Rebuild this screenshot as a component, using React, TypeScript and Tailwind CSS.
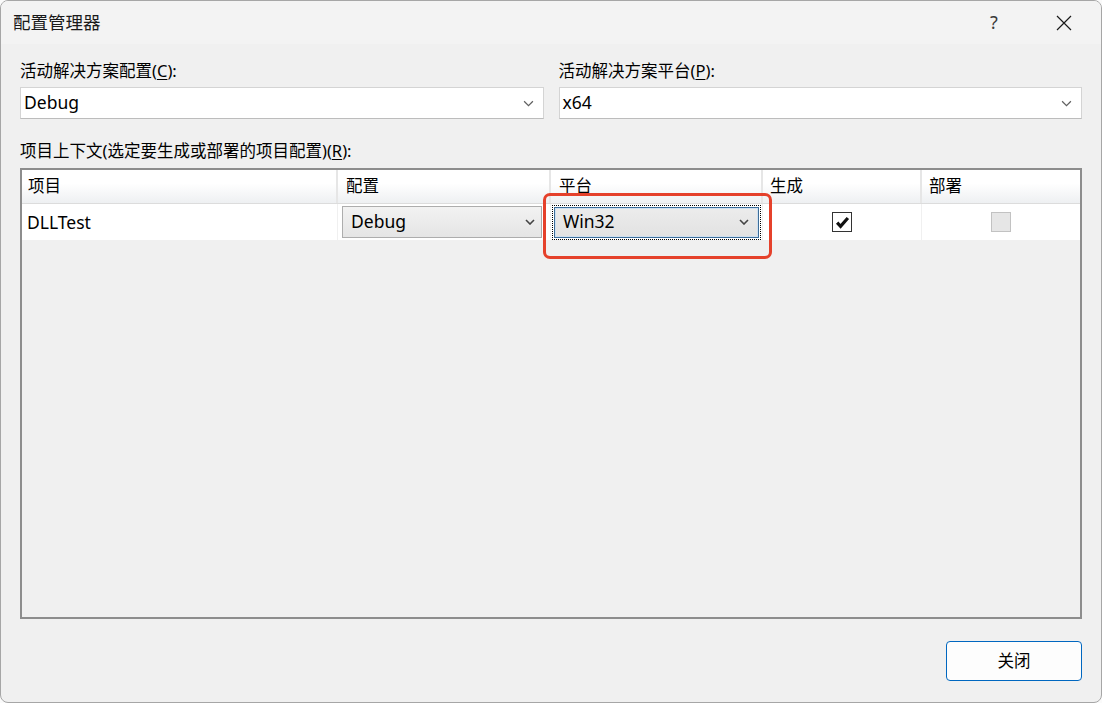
import React from 'react';

const font = "font-['Noto_Sans','Noto_Sans_CJK_SC',sans-serif]";

const Chevron = ({ className, width = 1.1 }: { className?: string; width?: number }) => (
  <svg viewBox="0 0 10 6" className={className} fill="none" stroke="currentColor" strokeWidth={width}>
    <path d="M1 1l4 4 4-4" />
  </svg>
);

const TopCombo = ({ value }: { value: string }) => (
  <div className="h-[32px] bg-white border border-[#d4d4d4] border-b-[#bcbcbc] flex items-center justify-between pl-[3px] pr-[9px]">
    <span className="text-[17.5px] text-black leading-none">{value}</span>
    <Chevron className="w-[11px] h-[7px] text-[#606060]" />
  </div>
);

const App: React.FC = () => {
  return (
    <div className={`w-[1102px] h-[703px] bg-[#fafafa] ${font}`}>
      <div className="h-full rounded-[8px] border border-[#a6a6a6] bg-[#f0f0f0] overflow-hidden flex flex-col">
        {/* Title bar */}
        <div className="h-[43px] bg-[#f3f3f3] flex items-center justify-between pl-[12px]">
          <span className="text-[17.5px] text-[#1a1a1a]">配置管理器</span>
          <div className="flex items-center h-full">
            <div className="w-[70px] h-full flex items-center justify-center text-[18px] text-[#3a3a3a]">?</div>
            <div className="w-[70px] h-full flex items-center justify-center mr-[2px]">
              <svg viewBox="0 0 16 16" className="w-[16px] h-[16px]" stroke="#1a1a1a" strokeWidth="1.2">
                <path d="M1 1l14 14M15 1L1 15" />
              </svg>
            </div>
          </div>
        </div>

        {/* Body */}
        <div className="flex-1 flex flex-col px-[19px]">
          <div className="grid grid-cols-2 gap-x-[15px] mt-[15px]">
            <div>
              <div className="text-[16.5px] leading-[24px] text-black mb-[4px]">
                活动解决方案配置(<span className="underline underline-offset-2">C</span>):
              </div>
              <TopCombo value="Debug" />
            </div>
            <div>
              <div className="text-[16.5px] leading-[24px] text-black mb-[4px]">
                活动解决方案平台(<span className="underline underline-offset-2">P</span>):
              </div>
              <TopCombo value="x64" />
            </div>
          </div>

          <div className="text-[16.5px] leading-[24px] text-black mt-[20px] mb-[5px]">
            项目上下文(选定要生成或部署的项目配置)(<span className="underline underline-offset-2">R</span>):
          </div>

          {/* Grid */}
          <div className="relative h-[451px] border-2 border-[#8d8d8d] bg-[#f0f0f0]">
            <div className="flex h-[34px] bg-gradient-to-b from-white from-40% to-[#eef0f2] border-b border-[#dcdcdc] text-[16.5px] text-black">
              <div className="w-[316px] pl-[6px] flex items-center border-r-2 border-[#e6e6e6]">项目</div>
              <div className="w-[213px] pl-[8px] flex items-center border-r-2 border-[#e6e6e6]">配置</div>
              <div className="w-[212px] pl-[8px] flex items-center border-r-2 border-[#e6e6e6]">平台</div>
              <div className="w-[159px] pl-[7px] flex items-center border-r-2 border-[#e6e6e6]">生成</div>
              <div className="flex-1 pl-[7px] flex items-center">部署</div>
            </div>
            <div className="flex h-[36px] bg-white text-black">
              <div className="w-[316px] pl-[5px] flex items-center border-r border-[#f0f0f0] text-[17.5px]">DLLTest</div>
              <div className="w-[213px] pl-[4px] pr-[8px] flex items-center border-r border-[#f0f0f0]">
                <div className="w-full h-[32px] border border-[#adadad] bg-gradient-to-b from-[#f2f2f2] to-[#e5e5e5] flex items-center justify-between pl-[8px] pr-[6px]">
                  <span className="text-[17.5px] leading-none">Debug</span>
                  <Chevron className="w-[10px] h-[6px] text-[#444]" width={1.6} />
                </div>
              </div>
              <div className="w-[212px] pl-[1px] pr-[1px] flex items-center border-r border-[#f0f0f0]">
                <div className="w-full h-[35px] border border-dotted border-black p-[1px]">
                  <div className="w-full h-full border border-[#3c6d99] bg-gradient-to-b from-[#ececec] to-[#e2e2e2] flex items-center justify-between pl-[8px] pr-[9px] shadow-[inset_0_0_0_1px_#cfe0f0]">
                    <span className="text-[17.5px] leading-none">Win32</span>
                    <Chevron className="w-[10px] h-[6px] text-[#444]" width={1.6} />
                  </div>
                </div>
              </div>
              <div className="w-[159px] flex items-center justify-center border-r border-[#f0f0f0]">
                <div className="w-[20px] h-[20px] border border-[#333] bg-white flex items-center justify-center">
                  <svg viewBox="0 0 14 14" className="w-[15px] h-[15px]" fill="none" stroke="#111" strokeWidth="3">
                    <path d="M2 7.2l3.2 3.4L12 2.8" />
                  </svg>
                </div>
              </div>
              <div className="flex-1 flex items-center justify-center">
                <div className="w-[20px] h-[20px] border border-[#c2c2c2] bg-[#e6e6e6]" />
              </div>
            </div>
            {/* red annotation */}
            <div className="absolute left-[521px] top-[23px] w-[229px] h-[66px] border-[3px] border-[#e5412b] rounded-[7px] pointer-events-none" />
          </div>

          <div className="flex justify-end mt-[22px]">
            <button className="w-[136px] h-[40px] rounded-[4px] border border-[#0067c0] bg-[#fdfdfd] text-[16.5px] text-black">
              关闭
            </button>
          </div>
        </div>
      </div>
    </div>
  );
};

export default App;
